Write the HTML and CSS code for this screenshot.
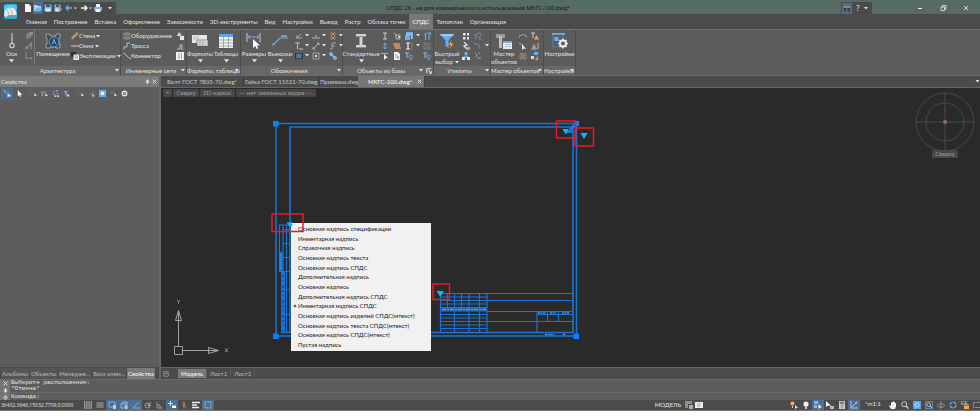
FILE: index.html
```html
<!DOCTYPE html>
<html lang="ru">
<head>
<meta charset="utf-8">
<title>СПДС 26</title>
<link rel="stylesheet" href="styles.css">
</head>
<body>
<svg class="sprite" aria-hidden="true">
  <symbol id="caret" viewBox="0 0 4 3"><path d="M0 0h4L2 2.6z" fill="#e4e4e4"/></symbol>
  <symbol id="logo" viewBox="0 0 16 16"><rect x="1" y="0" width="13" height="15" rx="1.5" fill="#18aede"/><path d="M1 2Q6 0 14 1V5L1 8z" fill="#4fc9ec"/><path d="M1 11.5Q1 4 7 3.5T14 10.5Q12 11.5 8.500 11 4 11 3 13.500z" fill="#e8e8e8"/><path d="M3 13.500Q5 10.500 9 11.200T14 10.500L13.500 12.500Q9 12 6 14z" fill="#8b9599"/><path d="M6.500 4Q9.500 6 9 10.500M4 5.500Q6 8 5.500 11" fill="none" stroke="#a4abad" stroke-width=".8"/></symbol>
  <symbol id="new" viewBox="0 0 8 8"><path d="M1 0h4l2 2v6H1z" fill="#f4f4f4"/><path d="M5 0v2h2" fill="#aaa"/></symbol>
  <symbol id="open" viewBox="0 0 8 8"><path d="M0 1h3l1 1h3v5H0z" fill="#b8d5f0"/><path d="M2 3.500h6L6.500 7.500H.5z" fill="#6fb3f5"/></symbol>
  <symbol id="save" viewBox="0 0 8 8"><path d="M.5.5h7v7h-7z" fill="#7db6ec"/><path d="M2 .5h4v2.500H2z" fill="#475a6c"/><path d="M1.500 4.500h5v3h-5z" fill="#dcebf8"/></symbol>
  <symbol id="saveas" viewBox="0 0 8 8"><path d="M.5.5h6v7h-6z" fill="#7db6ec"/><path d="M2 .5h3v2.500H2z" fill="#475a6c"/><path d="M1.500 4.500h3v3h-3z" fill="#dcebf8"/><path d="M4 7.500 7 4l1 1-3 3z" fill="#e29a55"/></symbol>
  <symbol id="undo" viewBox="0 0 8 8"><path d="M3.500 1.500 1 4l2.500 2.500M1 4h6" fill="none" stroke="#64b0ff" stroke-width="1.400"/></symbol>
  <symbol id="redo" viewBox="0 0 8 8"><path d="M4.500 1.500 7 4 4.500 6.500M7 4H1" fill="none" stroke="#f0f0f0" stroke-width="1.400"/></symbol>
  <symbol id="print" viewBox="0 0 8 8"><path d="M2 0h4v3H2z" fill="#f2f2f2"/><path d="M0 3h8v3.500H0z" fill="#6fb3f5"/><path d="M1.500 5h5v3h-5z" fill="#f2f2f2"/></symbol>
  <symbol id="axis" viewBox="0 0 16 16"><path d="M8 0v10" stroke="#d8d8d8" stroke-width="1"/><circle cx="8" cy="12.500" r="2.200" fill="none" stroke="#d8d8d8" stroke-width="1.100"/></symbol>
  <symbol id="ax1" viewBox="0 0 8 8"><path d="M1 3h6M1 5h5M3 1v6M5.500 0v5" stroke="#9c9c9c" stroke-width=".8"/><path d="M4 0h4v3H4z" fill="#8c8c8c"/></symbol>
  <symbol id="ax2" viewBox="0 0 8 8"><path d="M1 6 6 2M6 0v7M1 5l2 2" stroke="#aaa" stroke-width=".9" fill="none"/><circle cx="1.500" cy="6" r="1" fill="none" stroke="#aaa" stroke-width=".6"/></symbol>
  <symbol id="ax3" viewBox="0 0 8 8"><path d="M1 0v6h6" stroke="#9c9c9c" stroke-width=".8" fill="none"/><circle cx="1.500" cy="6.500" r="1" fill="#8a8a8a"/><circle cx="6.500" cy="6.500" r="1" fill="#8a8a8a"/></symbol>
  <symbol id="room" viewBox="0 0 16 16"><path d="M1 1h4v2h6V1h4v4h-1v6h1v4h-4v-1H5v1H1v-4h1V5H1z" fill="#3e4c57" stroke="#bcbcbc" stroke-width=".7"/><circle cx="9" cy="9" r="4.800" fill="#2d3f50" stroke="#61a9ed" stroke-width=".8"/><path d="M7 11.500 9 6l2 5.500M7.500 9.700h3" fill="none" stroke="#61a9ed" stroke-width="1"/></symbol>
  <symbol id="wall" viewBox="0 0 8 8"><path d="M1 7 7 1" stroke="#d0863e" stroke-width="2"/><path d="M.3 6.300 6.300.3" stroke="#f0e4d8" stroke-width=".6"/></symbol>
  <symbol id="window" viewBox="0 0 8 8"><path d="M0 4h8" stroke="#d8a070" stroke-width="1.400"/><path d="M2 4h3" stroke="#68aef2" stroke-width="1.600"/></symbol>
  <symbol id="expl" viewBox="0 0 8 8"><path d="M0 0h5v5H0z" fill="#2e2e2e"/><path d="M2.500 2.500H8V8H2.500z" fill="#f0f0f0"/><path d="M3.500 4h3.500M3.500 6h3.500" stroke="#777" stroke-width=".7"/></symbol>
  <symbol id="equip" viewBox="0 0 8 8"><path d="M2 1h4v6H2zM0 2h2M0 6h2M6 2h2M6 6h2M4 1v6" fill="none" stroke="#aaa" stroke-width=".9" stroke-dasharray="1.500 .5"/></symbol>
  <symbol id="route" viewBox="0 0 8 8"><path d="M1 7.500V5h3V1h3" fill="none" stroke="#c8c8c8" stroke-width=".9"/></symbol>
  <symbol id="conn" viewBox="0 0 8 8"><path d="m0 1 2 1 4 4 2 1" fill="none" stroke="#c8c8c8" stroke-width=".9"/></symbol>
  <symbol id="n1" viewBox="0 0 8 8"><path d="m1 4 2-4 2 4zM4 4h4v4H4z" fill="#e4e4e4"/><path d="m4 1 3 3" stroke="#60a9f0"/></symbol>
  <symbol id="n2" viewBox="0 0 8 8"><path d="M1 7h3V3h3" fill="none" stroke="#bbb" stroke-width="1"/><path d="M5 4h2v4H5z" fill="#d0863e"/></symbol>
  <symbol id="n3" viewBox="0 0 8 8"><path d="M0 0h8v8H0z" fill="#f0f0f0"/><path d="M3 1v6M5.500 1v6" stroke="#666" stroke-width=".6"/></symbol>
  <symbol id="formats" viewBox="0 0 16 16"><path d="M0 2h15v8H0z" fill="#e6e6e6"/><path d="M1 4h6M1 6h6" stroke="#aaa" stroke-width=".7"/><path d="M5 7h11v6H5z" fill="#f5f5f5" stroke="#555" stroke-width=".6"/><path d="M5 9h11M5 11h11M8 7v6M11 7v6" stroke="#888" stroke-width=".6"/></symbol>
  <symbol id="tables" viewBox="0 0 16 16"><path d="M1 1h14v14H1z" fill="#f3f3f3"/><path d="M1 1h14v3H1z" fill="#5ba5e8"/><path d="M1 7h14M1 10h14M1 13h14M5.500 4v11M10.500 4v11" stroke="#8d8d8d" stroke-width=".7"/></symbol>
  <symbol id="dims" viewBox="0 0 16 16"><path d="M1 0v9M14 0v9" stroke="#c8c8c8" stroke-width="1"/><path d="M2 4h11M4 2 2 4l2 2M11 2l2 2-2 2" stroke="#64aef0" stroke-width="1" fill="none"/><path d="M7 6v9l2.200-2 1.600 3 1.400-.7-1.500-2.800H14z" fill="#fff"/></symbol>
  <symbol id="leader" viewBox="0 0 16 16"><path d="m0 13 1-3.500L3 11z" fill="#64aef0"/><path d="M1 12 8 5h8" stroke="#64aef0" stroke-width="1.100" fill="none"/><path d="M9 3h6" stroke="#ddd" stroke-width=".9"/></symbol>
  <symbol id="o1" viewBox="0 0 8 8"><path d="M1 6h6M3 5l3-3M2 3v3" stroke="#b8b8b8" stroke-width=".9"/></symbol>
  <symbol id="o2" viewBox="0 0 8 8"><path d="M2.500 3h3L4 6z" fill="#d0863e"/><path d="M0 6h8" stroke="#c4c4c4" stroke-width=".9"/></symbol>
  <symbol id="o3" viewBox="0 0 8 8"><path d="M2 0 6 4 2 8M6 0 2 4l4 4" stroke="#c98a50" stroke-width=".8" fill="none"/><path d="M1 2h6M1 6h6" stroke="#aaa" stroke-width=".6"/></symbol>
  <symbol id="o4" viewBox="0 0 8 8"><path d="M0 1h5M2.500 1v6M4 7h4" stroke="#ccc" stroke-width=".9"/></symbol>
  <symbol id="o5" viewBox="0 0 8 8"><path d="m1 7 6-6M1 5v2h2M5 1h2v2" stroke="#c0c0c0" stroke-width=".9" fill="none"/></symbol>
  <symbol id="o6" viewBox="0 0 8 8"><path d="M7 1H3v3h3M3 4v3H1" stroke="#b0b0b0" stroke-width=".9" fill="none"/></symbol>
  <symbol id="o7" viewBox="0 0 8 8"><path d="M0 1h8v6H0z" fill="#26394b"/><path d="m1 2 6 4M1 6l6-4" stroke="#9ab" stroke-width=".7"/><circle cx="4" cy="4" r="2" fill="none" stroke="#58a2e8" stroke-width=".7"/></symbol>
  <symbol id="o8" viewBox="0 0 8 8"><path d="M1 1h6v6H1z" fill="none" stroke="#aaa" stroke-width=".9"/><path d="M3 3h2v2H3z" fill="#ddd"/></symbol>
  <symbol id="o9" viewBox="0 0 8 8"><path d="m1 1 6 6" stroke="#64aef0" stroke-width="1.800"/><circle cx="2" cy="2" r="1.500" fill="none" stroke="#cde" stroke-width=".6"/><circle cx="6" cy="6" r="1.500" fill="none" stroke="#cde" stroke-width=".6"/></symbol>
  <symbol id="beam" viewBox="0 0 16 16"><path d="M3 1h10v3H9.500v8H13v3H3v-3h3.500V4H3z" fill="#d4d4d4"/><path d="M3 3h10v1H3zM3 14h10v1H3z" fill="#8d8d8d"/></symbol>
  <symbol id="b1" viewBox="0 0 8 8"><path d="M2 1h4M2 7h4M4 1v6" stroke="#ccc" stroke-width="1"/></symbol>
  <symbol id="b2" viewBox="0 0 8 8"><path d="M1 1 4 4M3 3h4v4H3z" stroke="#bbb" stroke-width=".9" fill="none"/><path d="M5 4h2v2H5z" fill="#ccc"/></symbol>
  <symbol id="b3" viewBox="0 0 8 8"><path d="M0 3h5v5H0z" fill="#68b0f5"/><path d="M1 2.500h5.500V7H8V0H1z" fill="#68b0f5"/><path d="M1 2.500h5.500V7" stroke="#d5e6f5" stroke-width=".7" fill="none"/></symbol>
  <symbol id="b4" viewBox="0 0 8 8"><path d="M1 2h3M2.500 2v6M4 1h4L6 3.500V8" stroke="#68b0f5" stroke-width="1.100" fill="none"/></symbol>
  <symbol id="b5" viewBox="0 0 8 8"><path d="M4 1v6M2.500 3 4 1l1.500 2M2.500 5 4 7l1.500-2" stroke="#68b0f5" stroke-width=".9" fill="none"/></symbol>
  <symbol id="b6" viewBox="0 0 8 8"><path d="M0 1h7v6H2z" fill="#c58a54"/><path d="M5 5h3v3z" fill="#8e8e8e"/></symbol>
  <symbol id="b7" viewBox="0 0 8 8"><path d="M1 1h4M1 7h4M3 1v6" stroke="#f0f0f0" stroke-width="1.200"/><path d="M6 0h1v8H6" stroke="#c58a54" stroke-width=".7" fill="none"/></symbol>
  <symbol id="b8" viewBox="0 0 8 8"><path d="M1 1h2v6H1zM5 1h2v6H5z" stroke="#888" stroke-width=".8" fill="none"/></symbol>
  <symbol id="b9" viewBox="0 0 8 8"><path d="M0 1.500h7" stroke="#68b0f5" stroke-width="1.300"/><path d="M3 2v6l2-2h2z" fill="#eee"/></symbol>
  <symbol id="b10" viewBox="0 0 8 8"><path d="M1 0h4l2 2v6H1z" fill="#f0f0f0"/><path d="M2 3h3M2 5h2" stroke="#888" stroke-width=".7"/><circle cx="5" cy="5.500" r="1.300" fill="#8ab"/></symbol>
  <symbol id="b11" viewBox="0 0 8 8"><path d="M0 1h4M2 1v5" stroke="#bbb" stroke-width=".9"/><circle cx="5.500" cy="4.500" r="1.700" fill="none" stroke="#68b0f5" stroke-width=".9"/><path d="M5 7.500h1.500" stroke="#68b0f5"/></symbol>
  <symbol id="filter" viewBox="0 0 16 16"><path d="M1 1h14L9.500 7.500V15L6.500 13V7.500z" fill="#62aef5"/><path d="M1 1h14l-1.200 2H2.200z" fill="#9accf8"/><path d="m12.500 7-3 5h2.500l-1.500 4 4-5.500H12z" fill="#f0a050"/></symbol>
  <symbol id="u1" viewBox="0 0 8 8"><path d="M1 1h2.500v2.500H1zM5 1h2v2.500H5zM1 5h2.500v2.500H1zM5 5h2v2.500H5z" fill="#dce6ef"/></symbol>
  <symbol id="u2" viewBox="0 0 8 8"><circle cx="5" cy="3" r="2.200" fill="none" stroke="#5e8fbe" stroke-width=".9"/><path d="M3 5 1 7M0 3h2M5 7h2" stroke="#aaa" stroke-width=".8"/></symbol>
  <symbol id="u3" viewBox="0 0 8 8"><path d="m2 0 3 3-3 1 3 3" stroke="#e8e8e8" stroke-width="1.300" fill="none"/><path d="M5 5h3v3H5z" fill="#e09b58"/></symbol>
  <symbol id="u4" viewBox="0 0 8 8"><path d="M0 1.500q6 0 6 6" stroke="#5e9bd6" stroke-width=".9" fill="none"/></symbol>
  <symbol id="u5" viewBox="0 0 8 8"><path d="M2.500 0h3v3h-3z" fill="#68b0f5"/><path d="M0 5h3v3H0zM5 5h3v3H5z" fill="#e8e8e8"/><path d="M4 3v3M1 5h6" stroke="#ccc" stroke-width=".7"/></symbol>
  <symbol id="u6" viewBox="0 0 8 8"><path d="m1 1 2 2-2 2M3 6h4M4 1h2" stroke="#aaa" stroke-width=".9" fill="none"/></symbol>
  <symbol id="master" viewBox="0 0 16 16"><path d="M0 1h9v4H0z" fill="#9b9b9b"/><path d="M3 3h3v12H3z" fill="#bcbcbc"/><path d="M7 8h9v8H7z" fill="#ececec"/><path d="M7 8h9v1.800H7z" fill="#5ba5e8"/><path d="M9 11.500h6M9 13.500h6" stroke="#aaa" stroke-width=".7"/></symbol>
  <symbol id="m1" viewBox="0 0 8 8"><path d="M0 5q4-5 8 0M0 3v3M8 3v3" stroke="#9bb6d0" stroke-width=".8" fill="none"/></symbol>
  <symbol id="m2" viewBox="0 0 8 8"><path d="M0 1h4M2 1v5" stroke="#ccc" stroke-width="1"/><path d="M5.500 3 8 7.500H3z" fill="#f0a050"/></symbol>
  <symbol id="m3" viewBox="0 0 8 8"><path d="m0 1 3 2" stroke="#60a9f0" stroke-width="1.200"/><path d="M3 2v6l1.500-1.500L7 7z" fill="#eee"/></symbol>
  <symbol id="m4" viewBox="0 0 8 8"><path d="M0 7h6M1 5h4M3 2v5M7 1v6" stroke="#b8b8b8" stroke-width="1"/></symbol>
  <symbol id="m5" viewBox="0 0 8 8"><path d="M4 1v6M1 3l1-2 1 2v4H1zM5 3l1-2 1 2v4H5z" stroke="#b89878" stroke-width=".7" fill="none"/></symbol>
  <symbol id="m6" viewBox="0 0 8 8"><path d="M3 0h4v3H3z" fill="#68b0f5"/><path d="M0 4h3v3H0z" fill="#ddd"/><path d="m4 8 3-4v4z" fill="#e09b58"/></symbol>
  <symbol id="settings" viewBox="0 0 16 16"><path d="M0 .5h13" stroke="#68b0f5" stroke-width="2.500"/><path d="M1 2v12h6M11 2v3" stroke="#4385c4" stroke-width="1" fill="none"/><path d="M2.500 4h4v4h-4z" fill="#68b0f5"/><circle cx="11" cy="10.500" r="3" fill="none" stroke="#f0f0f0" stroke-width="2"/><path d="M11 5.500v2M11 13.500v2M6 10.500h2M14 10.500h2M7.500 7l1.300 1.300M13.200 12.700l1.300 1.300M14.500 7l-1.300 1.300M8.800 12.700 7.500 14" stroke="#f0f0f0" stroke-width="1.500"/></symbol>
  <symbol id="launch" viewBox="0 0 8 8"><path d="M1 7V1h6M3 3l4 4M7 4v3H4" stroke="#eee" stroke-width="1.200" fill="none"/></symbol>
  <symbol id="pin" viewBox="0 0 8 8"><path d="M2.500 1h3v4h-3z" fill="#f0f0f0"/><path d="M1 5h6M4 5v3" stroke="#f0f0f0" stroke-width="1.200"/></symbol>
  <symbol id="x" viewBox="0 0 8 8"><path d="m1 1 6 6M7 1 1 7" stroke="#f0f0f0" stroke-width="1.400"/></symbol>
  <symbol id="sel" viewBox="0 0 8 8"><path d="m1 1 2.500 2.500" stroke="#8db5dc" stroke-width=".9"/><path d="M4.500 3.500v4L6 6.500h2z" fill="#f0f0f0"/></symbol>
  <symbol id="cursor" viewBox="0 0 8 8"><path d="M2 0v7l1.600-1.300L4.800 8l1-.5L4.700 5.300H7z" fill="#fff"/></symbol>
  <symbol id="s3" viewBox="0 0 8 8"><path d="M1 1h2M1 1v2" stroke="#777" stroke-width=".8"/><path d="M5 3.500v4L6.300 6.500H8z" fill="#e8e8e8"/></symbol>
  <symbol id="s4" viewBox="0 0 8 8"><path d="M0 1h6v2H3v4H0z" fill="#808080"/><path d="M5 3.500v4L6.300 6.500H8z" fill="#e8e8e8"/></symbol>
  <symbol id="s5" viewBox="0 0 8 8"><path d="M1 2h2M4 1h3M1 5h2M5 4h2" stroke="#64aef0" stroke-width="1.400"/><path d="M3 6h2v2H3zM6 6h2v2H6z" fill="#b8d8f5"/></symbol>
  <symbol id="s6" viewBox="0 0 8 8"><path d="M0 1h6L4 3v4L2.500 6V3z" fill="#64aef0"/><path d="M5 4v4l1.300-1H8z" fill="#e8e8e8"/></symbol>
  <symbol id="s7" viewBox="0 0 8 8"><path d="M1 4l2 2 4-5" stroke="#5f8fbe" stroke-width="1" fill="none"/><path d="M5 4v4l1.300-1H8z" fill="#d8d8d8"/></symbol>
  <symbol id="s8" viewBox="0 0 8 8"><path d="M0 0h8v8H0z" fill="#6cadf0"/><circle cx="4" cy="4" r="2" fill="#fff"/></symbol>
  <symbol id="s9" viewBox="0 0 8 8"><path d="M1 3l3-1" stroke="#b98250" stroke-width="1.200"/><path d="M5 3.500v4L6.300 6.500H8z" fill="#e8e8e8"/></symbol>
  <symbol id="s10" viewBox="0 0 8 8"><circle cx="4" cy="4" r="2.600" fill="none" stroke="#e4e4e4" stroke-width="1.500"/><circle cx="4" cy="4" r=".8" fill="#e4e4e4"/></symbol>
  <symbol id="dots" viewBox="0 0 8 8"><path d="M0 1h8M0 3h8M0 5h8M0 7h8" stroke="#ededed" stroke-width="1.100" stroke-dasharray="1.300 .93"/></symbol>
  <symbol id="hash" viewBox="0 0 8 8"><path d="M0 2h8M0 4h8M0 6h8M2 1v6M4 1v6M6 1v6" stroke="#a0a0a0" stroke-width=".7"/></symbol>
  <symbol id="t1" viewBox="0 0 8 8"><path d="M1 1h6v5H1z" fill="none" stroke="#8fc0ee" stroke-width=".8"/><path d="M5 4h3v4H5z" fill="#a8d2f8"/></symbol>
  <symbol id="t2" viewBox="0 0 8 8"><path d="M1 3h4v4H1zM1 3l2-2h4v4L5 7M5 3l2-2" fill="none" stroke="#9cc8f0" stroke-width=".8"/><path d="M5 4.500h2.500V8H5z" fill="#a8d2f8"/></symbol>
  <symbol id="t3" viewBox="0 0 8 8"><path d="M7 1 1 7h7" fill="none" stroke="#8fc0ee" stroke-width=".8"/></symbol>
  <symbol id="t4" viewBox="0 0 8 8"><circle cx="3.500" cy="4.500" r="2.500" fill="none" stroke="#b4b4b4" stroke-width=".8"/><path d="M3.500 4.500 7.500 1M3.500 4.500H7" stroke="#b4b4b4" stroke-width=".8"/></symbol>
  <symbol id="t5" viewBox="0 0 8 8"><path d="M1 1v6h6M1 4h3v3" fill="none" stroke="#a8a8a8" stroke-width=".8"/></symbol>
  <symbol id="t6" viewBox="0 0 8 8"><path d="M2.500 0v5M0 2.500h5" stroke="#cde4fa" stroke-width="1"/><path d="M4 4.500h4v2.500H4z" fill="#fff"/></symbol>
  <symbol id="t7" viewBox="0 0 8 8"><path d="m2 1 4 6M4 0v8" stroke="#b98250" stroke-width=".8"/><path d="M5 2 3 6" stroke="#999" stroke-width=".8"/></symbol>
  <symbol id="t8" viewBox="0 0 8 8"><path d="M0 1.500h8M0 4h5M0 6.500h7" stroke="#f0f0f0" stroke-width="1.300"/></symbol>
  <symbol id="t9" viewBox="0 0 8 8"><path d="M1 1h6v6H1z" fill="none" stroke="#a9d0f5" stroke-width=".9" stroke-dasharray="1 .5"/></symbol>
  <symbol id="r1" viewBox="0 0 8 8"><path d="M0 0h7v3H3v4H0z" fill="#8e8e8e"/><path d="M4 4h4v4H4z" fill="#aaa"/></symbol>
  <symbol id="r2" viewBox="0 0 8 8"><path d="M0 1h8v6H0z" fill="#ededed"/><path d="M2 3h4M2 5h3" stroke="#888" stroke-width=".8"/></symbol>
  <symbol id="r3" viewBox="0 0 8 8"><circle cx="2.500" cy="2.500" r="2" fill="#f0ae6a"/><path d="M2 5h1v2H2z" fill="#ccc"/><path d="M5 4v4l1.300-1H8z" fill="#fff"/></symbol>
  <symbol id="r4" viewBox="0 0 8 8"><circle cx="4" cy="3" r="2.600" fill="#eee"/><path d="M3 5h2v3H3z" fill="#ccc"/></symbol>
  <symbol id="r5" viewBox="0 0 8 8"><path d="M0 0h4v3H0zM0 4h3v3H0z" fill="#7fb9ee"/><path d="M4.500 3v5L6 6.500h2z" fill="#fff"/></symbol>
  <symbol id="r6" viewBox="0 0 8 8"><path d="M0 0v6l1.500-1.300H5z" fill="#fff"/><path d="M4 5h4v3H4z" fill="#bbb"/></symbol>
  <symbol id="r7" viewBox="0 0 8 8"><path d="M1 0h6v8H1z" fill="#d0d0d0"/><path d="M2 1h4v1.500H2zM2 4h4M2 6h4M4 3v5" fill="#666" stroke="#777" stroke-width=".5"/></symbol>
  <symbol id="r8" viewBox="0 0 8 8"><path d="M1 0v7h7M2 6l4-4" fill="none" stroke="#b5d6f5" stroke-width=".9"/><path d="M5 1h2v2z" fill="#ddd"/></symbol>
  <symbol id="hand" viewBox="0 0 8 8"><path d="M2 8 0 5l1-.7 1 .9V1.500h1V1h1V.5h1V1h1v1h1v3.500L6 8z" fill="#f0f0f0"/></symbol>
  <symbol id="mag" viewBox="0 0 8 8"><circle cx="3.200" cy="3.200" r="2.500" fill="none" stroke="#ddd" stroke-width=".9"/><path d="m5 5 2.600 2.600" stroke="#ddd" stroke-width="1.200"/></symbol>
  <symbol id="zall" viewBox="0 0 8 8"><path d="M0 0h8v8H0z" fill="#58a6f2"/><circle cx="4" cy="4" r="2" fill="none" stroke="#cfe6fc" stroke-width=".8"/></symbol>
  <symbol id="zwin" viewBox="0 0 8 8"><path d="M.5.5h7v7h-7z" fill="none" stroke="#6da6da" stroke-width=".7"/><circle cx="3.700" cy="3.700" r="1.900" fill="none" stroke="#ddd" stroke-width=".8"/><path d="m5 5 2 2" stroke="#ddd"/></symbol>
  <symbol id="orbit" viewBox="0 0 8 8"><path d="M4 0v8" stroke="#aaa" stroke-width=".7"/><ellipse cx="4" cy="4.500" rx="3.600" ry="1.800" fill="none" stroke="#aaa" stroke-width=".7"/></symbol>
  <symbol id="ring" viewBox="0 0 8 8"><circle cx="4" cy="4" r="3" fill="none" stroke="#68b0f5" stroke-width="1.300" stroke-dasharray="3.700 1"/></symbol>
  <symbol id="lock" viewBox="0 0 8 8"><path d="M0 0h5v3H0z" fill="none" stroke="#ccc" stroke-width=".8"/><path d="M3 4.500h5V8H3z" fill="#f0a558"/><path d="M4 4.500V3h3v1.500" fill="none" stroke="#f0a558" stroke-width=".8"/></symbol>
  <symbol id="full" viewBox="0 0 8 8"><path d="M.5 1.500h7v5h-7z" fill="none" stroke="#bbb" stroke-width=".8" stroke-dasharray="2 1"/></symbol>
</svg>

<header class="titlebar">
  <div class="quick">
    <svg class="logo"><use href="#logo"/></svg>
    <button class="q" aria-label="Создать"><svg><use href="#new"/></svg></button>
    <button class="q on" aria-label="Открыть"><svg><use href="#open"/></svg></button>
    <button class="q" aria-label="Сохранить"><svg><use href="#save"/></svg></button>
    <button class="q" aria-label="Сохранить как"><svg><use href="#saveas"/></svg></button>
    <button class="q wide" aria-label="Отменить"><svg><use href="#undo"/></svg><svg class="car"><use href="#caret"/></svg></button>
    <button class="q wide" aria-label="Вернуть"><svg><use href="#redo"/></svg><svg class="car"><use href="#caret"/></svg></button>
    <button class="q" aria-label="Печать"><svg><use href="#print"/></svg></button>
    <button class="q more" aria-label="Настроить панель"><svg class="car"><use href="#caret"/></svg></button>
  </div>
  <h1>СПДС 26 - не для коммерческого использования МКГС-100.dwg*</h1>
  <div class="corner">
    <div class="help">
      <button class="cal" aria-label="Интерфейс"><svg viewBox="0 0 8 8"><path d="M0 1h8v7H0z" fill="#222e3a"/><path d="M0 1h8v2H0z" fill="#d59b5d"/><path d="M1 5h6M1 7h6M3 3v5M5 3v5" stroke="#8b8b8b" stroke-width=".6"/></svg></button>
      <button class="ask">?</button>
      <svg class="car"><use href="#caret"/></svg>
    </div>
    <div class="wins">
      <button aria-label="Свернуть"><svg viewBox="0 0 8 8"><path d="M2 4.500h4" stroke="#e6ece9" stroke-width="1"/></svg></button>
      <button aria-label="Развернуть"><svg viewBox="0 0 8 8"><path d="M2 3h3.500v3.500H2zM3.500 3V1.500H7V5H5.500" fill="none" stroke="#e6ece9" stroke-width=".8"/></svg></button>
      <button aria-label="Закрыть"><svg viewBox="0 0 8 8"><path d="m2 2 4 4M6 2 2 6" stroke="#e6ece9" stroke-width=".9"/></svg></button>
    </div>
  </div>
</header>

<nav class="tabs">
  <button>Главная</button><button>Построение</button><button>Вставка</button><button>Оформление</button><button>Зависимости</button><button>3D-инструменты</button><button>Вид</button><button>Настройки</button><button>Вывод</button><button>Растр</button><button>Облака точек</button><button class="active">СПДС</button><button>Топоплан</button><button>Организация</button>
</nav>

<section class="ribbon">
  <div class="panel p-arch">
    <div class="tools">
      <button class="big w24"><svg class="ic"><use href="#axis"/></svg><span>Оси</span><svg class="car"><use href="#caret"/></svg></button>
      <div class="col line"><svg><use href="#ax1"/></svg><svg><use href="#ax2"/></svg><svg><use href="#ax3"/></svg></div>
      <button class="big w36"><svg class="ic"><use href="#room"/></svg><span>Помещение</span></button>
      <div class="rows">
        <button><svg><use href="#wall"/></svg>Стена<svg class="car"><use href="#caret"/></svg></button>
        <button><svg><use href="#window"/></svg>Окно<svg class="car"><use href="#caret"/></svg></button>
        <button><svg><use href="#expl"/></svg>Экспликации<svg class="car"><use href="#caret"/></svg></button>
      </div>
    </div>
    <div class="cap"><span>Архитектура</span><svg class="car"><use href="#caret"/></svg></div>
  </div>
  <div class="panel p-net">
    <div class="tools">
      <div class="rows grow">
        <button><svg><use href="#equip"/></svg>Оборудование</button>
        <button><svg><use href="#route"/></svg>Трасса</button>
        <button><svg><use href="#conn"/></svg>Коннектор</button>
      </div>
      <div class="col"><svg><use href="#n1"/></svg><svg><use href="#n2"/></svg><svg><use href="#n3"/></svg></div>
    </div>
    <div class="cap"><span>Инженерные сети</span><svg class="car"><use href="#caret"/></svg></div>
  </div>
  <div class="panel p-fmt">
    <div class="tools">
      <button class="big w26"><svg class="ic"><use href="#formats"/></svg><span>Форматы</span><svg class="car"><use href="#caret"/></svg></button>
      <button class="big w26"><svg class="ic"><use href="#tables"/></svg><span>Таблицы</span><svg class="car"><use href="#caret"/></svg></button>
    </div>
    <div class="cap"><span>Форматы, таблицы</span><svg class="car"><use href="#caret"/></svg></div>
  </div>
  <div class="panel p-note">
    <div class="tools">
      <button class="big w26"><svg class="ic"><use href="#dims"/></svg><span>Размеры</span><svg class="car"><use href="#caret"/></svg></button>
      <button class="big w26"><svg class="ic"><use href="#leader"/></svg><span>Выноски</span><svg class="car"><use href="#caret"/></svg></button>
      <div class="col dd"><svg><use href="#o1"/></svg><svg><use href="#o4"/></svg><svg><use href="#o7"/></svg></div>
      <div class="col cc"><svg><use href="#caret"/></svg><svg><use href="#caret"/></svg><svg><use href="#caret"/></svg></div>
      <div class="col dd"><svg><use href="#o2"/></svg><svg><use href="#o5"/></svg><svg><use href="#o8"/></svg></div>
      <div class="col cc"><svg><use href="#caret"/></svg><svg><use href="#caret"/></svg><svg><use href="#caret"/></svg></div>
      <div class="col dd"><svg><use href="#o3"/></svg><svg><use href="#o6"/></svg><svg><use href="#o9"/></svg></div>
      <div class="col cc"><svg><use href="#caret"/></svg><svg><use href="#caret"/></svg><svg></svg></div>
    </div>
    <div class="cap"><span>Обозначения</span><svg class="car"><use href="#caret"/></svg></div>
  </div>
  <div class="panel p-base">
    <div class="tools">
      <button class="big w36"><svg class="ic"><use href="#beam"/></svg><span>Стандартные</span><svg class="car"><use href="#caret"/></svg></button>
      <div class="col"><svg><use href="#b1"/></svg><svg><use href="#b5"/></svg><svg><use href="#b9"/></svg></div>
      <div class="col"><svg><use href="#b2"/></svg><svg><use href="#b6"/></svg><svg><use href="#b10"/></svg></div>
      <div class="col"><svg><use href="#b3"/></svg><svg><use href="#b7"/></svg><svg><use href="#b11"/></svg></div>
      <div class="col cc"><svg><use href="#caret"/></svg><svg><use href="#caret"/></svg><svg></svg></div>
      <div class="col"><svg><use href="#b4"/></svg><svg><use href="#b8"/></svg><svg><use href="#b11"/></svg></div>
    </div>
    <div class="cap"><span>Объекты из базы</span><svg class="car"><use href="#caret"/></svg><svg class="launch"><use href="#launch"/></svg></div>
  </div>
  <div class="panel p-util">
    <div class="tools">
      <button class="big w26"><svg class="ic"><use href="#filter"/></svg><span>Быстрый</span><span>выбор <svg class="car"><use href="#caret"/></svg></span></button>
      <div class="col"><svg><use href="#u1"/></svg><svg><use href="#u3"/></svg><svg><use href="#u5"/></svg></div>
      <div class="col"><svg><use href="#u2"/></svg><svg><use href="#u4"/></svg><svg><use href="#u6"/></svg></div>
      <div class="col cc"><svg></svg><svg><use href="#caret"/></svg><svg></svg></div>
    </div>
    <div class="cap"><span>Утилиты</span><svg class="car"><use href="#caret"/></svg></div>
  </div>
  <div class="panel p-master">
    <div class="tools">
      <button class="big w26"><svg class="ic"><use href="#master"/></svg><span>Мастер</span><span>объектов</span></button>
      <div class="col"><svg><use href="#m1"/></svg><svg><use href="#m3"/></svg><svg><use href="#m5"/></svg></div>
      <div class="col"><svg><use href="#m2"/></svg><svg><use href="#m4"/></svg><svg><use href="#m6"/></svg></div>
    </div>
    <div class="cap"><span>Мастер объектов</span><svg class="car"><use href="#caret"/></svg></div>
  </div>
  <div class="panel p-set">
    <div class="tools">
      <button class="big w30"><svg class="ic"><use href="#settings"/></svg><span>Настройки</span></button>
    </div>
    <div class="cap"><span>Настройки</span><svg class="car"><use href="#caret"/></svg></div>
  </div>
</section>

<main class="work">
  <aside class="props">
    <div class="head"><h2>Свойства</h2><button aria-label="Закрепить"><svg><use href="#pin"/></svg></button><button aria-label="Закрыть"><svg><use href="#x"/></svg></button></div>
    <div class="body">
      <div class="selbar">
        <svg class="on"><use href="#sel"/></svg><svg><use href="#cursor"/></svg><i></i><svg><use href="#s3"/></svg><svg><use href="#s4"/></svg><svg><use href="#s5"/></svg><svg><use href="#s6"/></svg><i></i><svg><use href="#s3"/></svg><svg><use href="#s7"/></svg><svg><use href="#s8"/></svg><svg><use href="#s9"/></svg><svg><use href="#s10"/></svg>
      </div>
    </div>
    <div class="ptabs"><button>Альбомы</button><button>Объекты</button><button>Менедже...</button><button>База элем...</button><button class="active">Свойства</button></div>
  </aside>
  <section class="doc">
    <div class="doctabs">
      <button class="d1">Болт ГОСТ 7805-70.dwg*</button><button class="d2">Гайка ГОСТ 15521-70.dwg</button><button class="d3">Привязки.dwg</button><button class="d4 active">МКГС-100.dwg*<svg><use href="#x"/></svg></button>
      <svg class="car"><use href="#caret"/></svg>
    </div>
    <div class="canvas">
      <div class="view"><button>+</button><button>Сверху</button><button>2D-каркас</button><button>--- нет связанных видов ---</button></div>
      <svg class="draw" aria-hidden="true">
        <g transform="translate(-161 -88)" fill="none" stroke="#1874d8">
          <path d="M276 123.500H576.500V336H276z" stroke-width="1.500"/>
          <path d="M290 332V127H573V332.500H281" stroke-width="1.600"/>
          <path d="M279.500 272V225H290M283 225v47M286.500 225v108M279 271.500H290M283 229.500h7M283 243.500h7M283 257.500h7M285 289.500h5M285 314.500h5" stroke-width="1.200"/>
          <path d="M281 252v20" stroke-width="3.500"/>
          <path d="M283 272v61" stroke-width="4"/>
          <path d="M283 275v57" stroke="#0b4e9e" stroke-width="1.500" stroke-dasharray="2 3 1 4 3 2"/>
          <path d="M281 254v16" stroke="#3d8ee8" stroke-width="1" stroke-dasharray="3 1"/>
          <path d="M440.500 332V293.500H573M487 300.500h86M487 311.500h86M487 321.500h86M440.500 297h46.500M440.500 300.500h46.500M440.500 304h46.500M440.500 307.500h46.500M440.500 311h46.500M440.500 314.500h46.500M440.500 318h46.500M440.500 321.500h46.500M440.500 325h46.500M440.500 328.500h46.500M447.500 293v17M461.500 293v17M454.500 293v39M469 293v39M479.500 293v39M487 293v39M537 311v21M537 314.500h36M547.500 312v10M558.500 312v10" stroke-width="1.200"/>
          <path d="M441 309.500h46" stroke="#1b62ae" stroke-width="3"/>
          <path d="M442 309.500h44" stroke="#4797f0" stroke-width="1.400" stroke-dasharray="4 1 2 1"/>
          <path d="M538 313h8M550 313h6M562 313h8M545 334.500h9M563 334.500h3" stroke="#4797f0" stroke-width="1.600" stroke-dasharray="2 .6"/>
          <path d="m570 129.500 5-4.500M567 131.500h6" stroke-width="2.500" stroke="#0a82ff"/>
          <path d="M273 121h5.500v5.500H273zM273 333.500h5.500v5.500H273zM573.500 333.500h5.500v5.500h-5.500zM574 121h5v5h-5z" fill="#0a82ff" stroke="none"/>
          <path d="M562.500 129h6.500l-3.200 5.500zM580.500 133h7l-3.500 6zM436.500 291h7.500l-3.700 6zM286.500 222.500h6.500l-3 5z" fill="#12b4f4" stroke="none"/>
          <g stroke="#aeaeae" stroke-width=".9"><path d="M174.500 346.500h8v8h-8zM178.500 346V311M182.500 350.500H218M175.500 320.500l3-10 3 10zM208.500 347.500l10 3-10 3z"/><path d="m177 300 1.500 1.700L180 300M178.500 301.500v2.200M225 348.500l3 3.500M228 348.500l-3 3.500" stroke-width=".8"/></g>
        </g>
      </svg>
      <div class="compass">
        <svg viewBox="0 0 60 60"><g fill="none" stroke="#484848"><circle cx="30" cy="30" r="29"/><circle cx="30" cy="30" r="19"/><path d="M30 1v58M1 30h58"/></g><circle cx="30" cy="30" r="2" fill="#957056"/></svg>
        <button>Сверху</button>
      </div>
      <ul class="popup">
        <li>Основная надпись спецификации</li><li>Инвентарная надпись</li><li>Справочная надпись</li><li>Основная надпись текста</li><li>Основная надпись СПДС</li><li>Дополнительная надпись</li><li>Основная надпись</li><li>Дополнительная надпись СПДС</li><li class="cur">Инвентарная надпись СПДС</li><li>Основная надпись изделий СПДС(мтекст)</li><li>Основная надпись текста СПДС(мтекст)</li><li>Основная надпись СПДС(мтекст)</li><li>Пустая надпись</li>
      </ul>
      <svg class="draw marks" aria-hidden="true">
        <g transform="translate(-161 -88)" fill="none" stroke="#e61c24" stroke-width="1.500"><path d="M272 214h31v17.500h-31zM556.500 121h19v17h-19zM575 128h18.500v18H575zM433 284h16.500v15.500H433z"/><path d="M291 223.500v4l2-4z" fill="#12b4f4" stroke="none"/></g>
      </svg>
    </div>
    <div class="sheets"><svg viewBox="0 0 8 8"><path d="M1 1h6v6H1z" fill="none" stroke="#aaa" stroke-width=".9"/><path d="M2 3.500h4" stroke="#7fb9ee"/></svg><button class="active">Модель</button><button>Лист1</button><button>Лист2</button></div>
  </section>
</main>

<section class="cmd">
  <div class="grip"><svg><use href="#x"/></svg><svg><use href="#pin"/></svg><svg><use href="#s10"/></svg></div>
  <div class="log">
    <p>Выберите расположение:</p>
    <p>*Отмена*</p>
    <div class="prompt"><label for="cmd">Команда:</label><input id="cmd" type="text"></div>
  </div>
</section>

<footer class="status">
  <span class="coord">36432.3646,15032.7709,0.0000</span>
  <div class="set">
    <svg><use href="#dots"/></svg><svg><use href="#hash"/></svg><svg class="on"><use href="#t1"/></svg><svg class="on"><use href="#t2"/></svg><svg class="on"><use href="#t3"/></svg><svg><use href="#t4"/></svg><svg><use href="#t5"/></svg><svg class="on"><use href="#t6"/></svg><svg><use href="#t7"/></svg><svg><use href="#t8"/></svg><svg class="on"><use href="#t9"/></svg>
  </div>
  <button class="model">МОДЕЛЬ</button>
  <div class="set two"><svg><use href="#r1"/></svg><svg><use href="#r2"/></svg></div>
  <div class="set"><svg><use href="#r3"/></svg><svg><use href="#r4"/></svg><svg class="on"><use href="#r5"/></svg><svg><use href="#r6"/></svg><svg><use href="#r7"/></svg><svg class="on"><use href="#r8"/></svg></div>
  <span class="scale">*m1:1</span>
  <div class="set last"><svg><use href="#hand"/></svg><svg><use href="#mag"/></svg><svg><use href="#zall"/></svg><svg><use href="#zwin"/></svg><svg><use href="#orbit"/></svg><svg><use href="#ring"/></svg><svg><use href="#lock"/></svg><svg><use href="#full"/></svg></div>
</footer>
</body>
</html>
```
FILE: styles.css
```css
* { box-sizing: border-box; }
html { background: #fff; }
body {
  margin: 0;
  padding-bottom: 9px;
  min-height: 100vh;
  display: flex;
  flex-direction: column;
  font: 6px/8px Lato, "Open Sans", sans-serif;
  color: #e4e4e4;
  overflow: hidden;
}
button {
  margin: 0;
  padding: 0;
  border: 0;
  background: none;
  color: inherit;
  font: inherit;
  white-space: nowrap;
}
svg { display: block; width: 8px; height: 8px; flex: none; }
h1, h2, p, ul { margin: 0; padding: 0; font: inherit; }
.sprite { position: absolute; width: 0; height: 0; }
.car, .cc svg { width: 4px; height: 3px; }

/* title bar */
.titlebar {
  display: grid;
  grid-template-columns: 1fr auto 1fr;
  height: 14px;
  background: #566b61;
}
.quick {
  display: flex;
  align-items: center;
  justify-self: start;
  width: 116px;
  height: 12px;
  margin-top: 2px;
  background: #4b4b4b;
}
.logo { width: 16px; height: 16px; margin: 7px 4px 0 3px; z-index: 1; }
.q { display: flex; align-items: center; justify-content: center; width: 10px; height: 12px; }
.q.on { background: #4d6d93; }
.q.wide { width: 15px; gap: 1px; }
.q.wide .car { width: 3px; }
.q.more { flex: 1; }
.titlebar h1 { padding-right: 24px; font-family: Roboto, sans-serif; line-height: 16px; color: #17201b; }
.corner { display: flex; justify-content: flex-end; padding-right: 10px; }
.help {
  display: flex;
  align-items: center;
  gap: 4px;
  width: 31px;
  height: 12px;
  margin: 2px 44px 0 0;
  background: #4b4b4b;
}
.cal { padding: 2px; background: #4d6d93; height: 11px; margin-left: 1px; }
.cal svg { width: 6px; height: 7px; }
.ask { font-size: 8px; }
.wins { display: flex; gap: 15px; align-items: center; }

/* ribbon tabs */
.tabs {
  display: flex;
  height: 15px;
  padding-left: 22px;
  background: #4b4b4b;
}
.tabs button { padding: 1px 3px 0 4px; }
.tabs .active { background: #777; color: #fff; }

/* ribbon */
.ribbon {
  display: flex;
  height: 47px;
  background: #5c5c5c;
  border-top: 1px solid #727272;
  border-bottom: 1px solid #6c6c6c;
}
.panel {
  display: flex;
  flex-direction: column;
  border-right: 1px solid #4c4c4c;
  flex: none;
}
.tools { display: flex; flex: 1; }
.tools > * { flex: none; }
.p-arch { width: 121px; }
.p-net { width: 66px; }
.p-fmt { width: 54px; }
.p-note { width: 102px; }
.p-base { width: 91px; }
.p-util { width: 57px; }
.p-master { width: 53px; }
.p-set { width: 32px; }
.cap {
  display: flex;
  align-items: center;
  height: 9px;
  padding-right: 1px;
  background: #686868;
  white-space: nowrap;
}
.cap span { flex: 1 1 0; min-width: 0; text-align: center; }
.launch { width: 6px; height: 6px; margin-left: 3px; }
.big { display: flex; flex-direction: column; align-items: center; padding-top: 3px; }
.big .ic { width: 16px; height: 16px; margin-bottom: 1px; }
.big span { display: flex; align-items: center; gap: 2px; height: 8px; }
.big > .car { width: 5px; height: 4px; margin-top: 1px; }
.w24 { width: 23px; }
.w26 { width: 26px; }
.w30 { width: 31px; }
.w36 { width: 36px; }
.col, .rows { display: flex; flex-direction: column; gap: 2px; padding-top: 2px; }
.col { width: 12px; align-items: center; }
.col.line { border-right: 1px solid #7a7a7a; margin-bottom: 2px; }
.col.dd { width: 11px; }
.col.cc { width: 6px; gap: 7px; padding-top: 4px; }
.rows button { display: flex; align-items: center; height: 8px; }
.rows .car { margin-left: 1px; }
.tools > .grow { flex: 1; padding-left: 2px; }

/* work area */
.work { display: flex; flex: 1; background: #4b4b4b; }
.props { width: 161px; display: flex; flex-direction: column; border-right: 2px solid #666; }
.head {
  display: flex;
  align-items: center;
  gap: 2px;
  height: 11px;
  padding: 0 2px 0 1px;
  background: #7b7b7b;
}
.head h2 { flex: 1; }
.head svg { width: 5px; height: 5px; }
.body { flex: 1; background: #5d5d5d; }
.selbar { display: flex; gap: 2px; padding: 1px; align-items: center; }
.selbar svg { padding: 1px; width: 9px; height: 11px; }
.selbar i { width: 1px; }
.selbar .on { width: 12px; background: #4d6d93; }
.ptabs { display: flex; height: 12px; padding: 1px 0 0 1px; background: #4b4b4b; gap: 1px; }
.ptabs button { padding: 0 1px; background: #555; color: #b9b9b9; }
.ptabs .active { background: #7a7a7a; color: #fff; }

.doc { flex: 1; display: flex; flex-direction: column; min-width: 0; }
.doctabs {
  display: flex;
  height: 12px;
  border-bottom: 1px solid #666;
  align-items: center;
}
.doctabs button { height: 11px; border-right: 1px solid #3f3f3f; color: #c9c9c9; }
.d1 { width: 83px; }
.d2 { width: 76px; padding-left: 1px; text-align: left; }
.d3 { width: 38px; }
.doctabs .active { display: flex; align-items: center; justify-content: space-between; width: 67px; padding: 0 2px 0 10px; background: #777; color: #fff; }
.active svg { width: 5px; height: 5px; }
.doctabs > .car { margin-left: auto; width: 5px; }
.canvas { flex: 1; position: relative; background: #2a2a2a; overflow: hidden; }
.draw { position: absolute; inset: 0; width: 100%; height: 100%; }
.view { display: flex; gap: 1px; padding: 1px 2px; }
.view button, .compass button { height: 8px; padding: 0 3px; background: #474747; color: #a0a0a0; line-height: 8px; border-radius: 1px; }
.compass { position: absolute; right: 5px; top: 4px; display: flex; flex-direction: column; align-items: center; }
.compass svg { width: 60px; height: 60px; margin-bottom: -2px; }
.popup {
  position: absolute;
  left: 130px;
  top: 135px;
  width: 140px;
  height: 128px;
  padding: 1px 0;
  display: grid;
  grid-auto-rows: 1fr;
  align-items: center;
  list-style: none;
  background: #f1f1f1;
  color: #161616;
}
.popup li { padding-left: 7px; white-space: nowrap; }
.cur { background: radial-gradient(circle at 4px 50%, #222 0, transparent 2px); }
.marks { pointer-events: none; }
.sheets { display: flex; align-items: center; height: 12px; border-top: 1px solid #666; color: #b9b9b9; }
.sheets svg { width: 6px; height: 6px; margin: 0 9px 0 2px; }
.sheets button { height: 9px; padding: 0 3px; border-right: 1px solid #5a5a5a; }
.sheets .active { background: #7a7a7a; color: #fff; }

/* command line */
.cmd { display: flex; height: 21px; background: #5d5d5d; border-top: 1px solid #6a6a6a; }
.grip { width: 10px; display: flex; flex-direction: column; align-items: center; gap: 2px; padding-top: 1px; background: #757575; }
.grip svg { width: 5px; height: 5px; }
.log { flex: 1; padding-left: 1px; font: 6px/6px "Liberation Mono", monospace; color: #e6e6e6; }
.prompt { display: flex; border-top: 1px solid #686868; line-height: 7px; }
.prompt input { flex: 1; height: 7px; padding: 0 2px; border: 0; outline: 0; background: none; color: inherit; font: inherit; }

/* status bar */
.status { display: flex; align-items: center; height: 11px; background: #4b4b4b; color: #e6e6e6; border-bottom: 1px solid #777; overflow: hidden; }
.coord { width: 82px; padding-left: 1px; font-family: "Open Sans", sans-serif; font-size: 5px; white-space: nowrap; }
.set { display: flex; }
.set svg { width: 12px; height: 10px; padding: 1px 2px; }
.set .on { background: #4d6d93; }
.model { margin-left: auto; margin-right: 3px; }
.two { margin: 0 84px 0 0; }
.two svg { width: 10px; padding: 1px; }
.scale { padding: 0 6px 2px 5px; }
.last { margin-right: -3px; }
```
